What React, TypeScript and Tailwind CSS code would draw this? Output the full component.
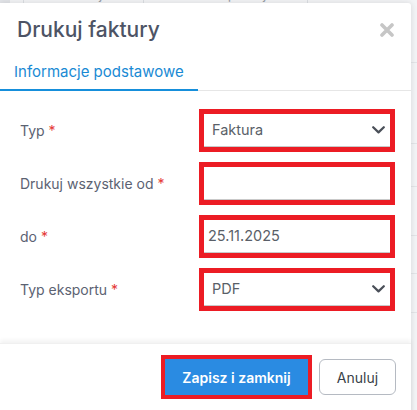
import React from "react";

function Chevron() {
  return (
    <svg width="13" height="8" viewBox="0 0 13 8" className="shrink-0">
      <path d="M1.2 1.2 L6.5 6.4 L11.8 1.2" fill="none" stroke="#4a4f58" strokeWidth="2.2" strokeLinecap="round" strokeLinejoin="round" />
    </svg>
  );
}

function CloseIcon() {
  return (
    <svg width="14" height="14" viewBox="0 0 14 14">
      <path d="M2 2 L12 12 M12 2 L2 12" stroke="#c6c6c6" strokeWidth="3.6" strokeLinecap="round" />
    </svg>
  );
}

function Row({ label, children }: { label: string; children: React.ReactNode }) {
  return (
    <div className="flex items-center h-[43px]">
      <div className="w-[199px] pl-[20px] text-[14px] text-[#5b6272]">
        {label} <span className="text-[#e53935]">*</span>
      </div>
      <div className="w-[196px] h-[43px] border-[5px] border-[#ec1c24]">
        {children}
      </div>
    </div>
  );
}

export default function App() {
  return (
    <div className="relative w-[417px] h-[410px] overflow-hidden bg-[#f3f4f6]" style={{ fontFamily: "Inter, 'Open Sans', sans-serif" }}>
      {/* page behind */}
      <div className="absolute left-0 top-[-14px] w-[417px] h-[18px] flex items-end text-[14px] text-[#9aa0a8]">
        <div className="w-[10px] h-full bg-[#e2e4e8]" />
        <div className="ml-[13px] w-px h-full bg-[#dcdfe3]" />
        <span className="ml-[40px]">Dodaj ▾</span>
        <div className="ml-[30px] w-px h-full bg-[#dcdfe3]" />
        <span className="ml-[60px]">Eksportuj ▾</span>
        <div className="ml-[30px] w-px h-full bg-[#dcdfe3]" />
      </div>
      <div className="absolute right-0 top-0 w-[6px] h-[410px] flex flex-col">
        <div className="h-[63px] border-b border-[#e3e5e8]" />
        <div className="h-[81px] border-b border-[#e3e5e8]" />
        <div className="h-[43px] border-b border-[#e3e5e8]" />
        <div className="h-[49px] border-b border-[#e3e5e8]" />
        <div className="h-[38px] border-b border-[#e3e5e8]" />
        <div className="h-[39px] border-b border-[#e3e5e8]" />
      </div>

      {/* modal */}
      <div className="absolute left-0 top-[3px] w-[411px] h-[430px] bg-white rounded-tr-[3px] shadow-[0_0_6px_rgba(0,0,0,0.12)] flex flex-col">
        <div className="flex items-center justify-between h-[52px] pl-[17px] pr-[17px] pt-[2px]">
          <h1 className="text-[21px] font-medium text-[#4d5465] leading-[28px]">Drukuj faktury</h1>
          <CloseIcon />
        </div>
        <div className="flex border-b border-[#e6e6e6] h-[36px]">
          <div className="w-[198px] border-b-2 border-[#168fdb] -mb-px flex items-center pl-[14px] text-[15px] text-[#1a8ad4]">
            Informacje podstawowe
          </div>
        </div>
        <div className="flex flex-col gap-[10px] pt-[18px] h-[252px]">
          <Row label="Typ">
            <div className="h-full flex items-center justify-between pl-[8px] pr-[5px] border-b border-[#c9c9c9] text-[14.5px] text-[#5a5f68]">
              <span>Faktura</span>
              <Chevron />
            </div>
          </Row>
          <Row label="Drukuj wszystkie od">
            <div className="h-full border-b border-[#c9c9c9]" />
          </Row>
          <Row label="do">
            <div className="h-full flex items-center pl-[4px] border-b border-[#c9c9c9] text-[14.5px] text-[#5a5f68]">
              25.11.2025
            </div>
          </Row>
          <Row label="Typ eksportu">
            <div className="h-full flex items-center justify-between pl-[8px] pr-[5px] border-b border-[#c9c9c9] text-[14.5px] text-[#5a5f68]">
              <span>PDF</span>
              <Chevron />
            </div>
          </Row>
        </div>
        <div className="flex-1 shadow-[0_-3px_4px_rgba(0,0,0,0.05)] border-t border-[#f0f0f0] flex justify-end items-start gap-[7px] pt-[11px] pr-[15px]">
          <div className="border-[4px] border-[#ec1c24]">
            <button className="w-[143px] h-[36px] bg-[#2a8be2] text-white text-[14px] font-semibold">Zapisz i zamknij</button>
          </div>
          <button className="mt-[4px] w-[77px] h-[36px] rounded-[6px] border border-[#b5bac2] text-[14px] text-[#3a3f48] bg-white">Anuluj</button>
        </div>
      </div>
    </div>
  );
}
